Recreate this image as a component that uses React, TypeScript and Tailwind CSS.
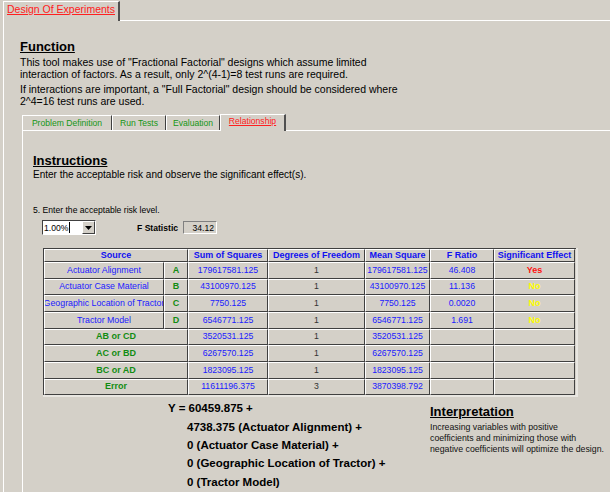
import React from "react";

const cellBase =
  "border-t border-l border-t-white border-l-white border-r border-b border-r-[#404040] border-b-[#404040] flex items-center justify-center whitespace-nowrap overflow-hidden";

type Row = {
  src: string;
  letter?: string;
  ss: string;
  df: string;
  ms: string;
  f: string;
  sig: string;
};

const rows: Row[] = [
  { src: "Actuator Alignment", letter: "A", ss: "179617581.125", df: "1", ms: "179617581.125", f: "46.408", sig: "Yes" },
  { src: "Actuator Case Material", letter: "B", ss: "43100970.125", df: "1", ms: "43100970.125", f: "11.136", sig: "No" },
  { src: "Geographic Location of Tractor", letter: "C", ss: "7750.125", df: "1", ms: "7750.125", f: "0.0020", sig: "No" },
  { src: "Tractor Model", letter: "D", ss: "6546771.125", df: "1", ms: "6546771.125", f: "1.691", sig: "No" },
  { src: "AB or CD", ss: "3520531.125", df: "1", ms: "3520531.125", f: "", sig: "" },
  { src: "AC or BD", ss: "6267570.125", df: "1", ms: "6267570.125", f: "", sig: "" },
  { src: "BC or AD", ss: "1823095.125", df: "1", ms: "1823095.125", f: "", sig: "" },
  { src: "Error", ss: "11611196.375", df: "3", ms: "3870398.792", f: "", sig: "" },
];

function Header({ children }: { children: React.ReactNode }) {
  return (
    <div className={`${cellBase} text-[9px] font-bold text-[#1010f0]`}>{children}</div>
  );
}

export default function App() {
  return (
    <div className="w-[610px] h-[492px] overflow-hidden bg-[#d4d0c8] font-['Liberation_Sans',Arial,sans-serif] text-black flex flex-col">
      {/* top tab bar */}
      <div className="flex h-[21px] shrink-0">
        <div className="ml-[3px] mt-[1px] w-[117px] h-[20px] border-l border-t border-white border-r-2 border-r-[#505050] flex justify-center pt-[1px]">
          <span className="text-[10.5px] leading-[12px] text-[#ff2020] underline">Design Of Experiments</span>
        </div>
        <div className="flex-1 border-b border-white" />
      </div>

      {/* outer panel */}
      <div className="ml-[3px] flex-1 border-l border-white pl-[16px] flex flex-col">
        <div className="mt-[18px] text-[13px] leading-[15px] font-bold underline">Function</div>
        <div className="mt-[2px] text-[10.5px] leading-[12px]">
          <p>
            This tool makes use of "Fractional Factorial" designs which assume limited
            <br />
            interaction of factors. As a result, only 2^(4-1)=8 test runs are required.
          </p>
          <p className="mt-[3px]">
            If interactions are important, a "Full Factorial" design should be considered where
            <br />
            2^4=16 test runs are used.
          </p>
        </div>

        {/* inner tabs */}
        <div className="mt-[7px] ml-[2px] flex items-end h-[16px] shrink-0">
          <div className="w-[90px] h-[15px] border-t border-l border-white border-r border-r-[#404040] flex justify-center pt-[2px] text-[8.6px] leading-[10px] text-[#149614]">
            Problem Definition
          </div>
          <div className="w-[54px] h-[15px] border-t border-l border-white border-r border-r-[#404040] flex justify-center pt-[2px] text-[8.6px] leading-[10px] text-[#149614]">
            Run Tests
          </div>
          <div className="w-[54px] h-[15px] border-t border-l border-white border-r border-r-[#404040] flex justify-center pt-[2px] text-[8.6px] leading-[10px] text-[#149614]">
            Evaluation
          </div>
          <div className="relative z-10 -mb-px w-[66px] h-[17px] bg-[#d4d0c8] border-t border-l border-white border-r-2 border-r-[#505050] flex justify-center pt-[1px] text-[8.6px] leading-[10px] text-[#ff2020] underline">
            Relationship
          </div>
        </div>

        {/* inner panel */}
        <div className="ml-[2px] flex-1 border-t border-l border-white pl-[10px] flex flex-col">
          <div className="mt-[22px] text-[13px] leading-[15px] font-bold underline">Instructions</div>
          <div className="mt-[1px] text-[10px] leading-[12px]">
            Enter the acceptable risk and observe the significant effect(s).
          </div>
          <div className="mt-[24px] text-[8.6px] leading-[10px]">5. Enter the acceptable risk level.</div>

          <div className="mt-[5px] flex items-center h-[15px]">
            <div className="ml-[9px] flex w-[54px] h-[15px] border border-t-[#404040] border-l-[#404040] border-r-white border-b-white bg-white">
              <div className="flex-1 flex items-center pl-[1px] text-[8.6px] leading-[10px]">
                1.00%
                <span className="ml-[1px] w-px h-[11px] bg-black" />
              </div>
              <div className="w-[13px] h-[13px] bg-[#d4d0c8] border border-t-white border-l-white border-r-[#404040] border-b-[#404040] flex items-center justify-center">
                <svg width="7" height="4" viewBox="0 0 7 4">
                  <path d="M0 0 H7 L3.5 4 Z" fill="#000" />
                </svg>
              </div>
            </div>
            <div className="ml-[41px] text-[8.6px] leading-[10px] font-bold">F Statistic</div>
            <div className="ml-[5px] w-[34px] h-[13px] border border-t-[#808080] border-l-[#808080] border-r-white border-b-white flex items-center justify-end pr-[2px] text-[8.6px] leading-[10px]">
              34.12
            </div>
          </div>

          {/* table */}
          <div className="mt-[13px] ml-[10px] w-[535px] border-r-2 border-b-2 border-[#e8e6e1]">
            <div className="grid grid-cols-[120px_24px_80px_97px_65px_64px_81px] grid-rows-[13px_repeat(8,16.67px)] border-t border-l border-[#404040]">
              <div className={`${cellBase} col-span-2 text-[9px] font-bold text-[#1010f0]`}>Source</div>
              <Header>Sum of Squares</Header>
              <Header>Degrees of Freedom</Header>
              <Header>Mean Square</Header>
              <Header>F Ratio</Header>
              <Header>Significant Effect</Header>
              {rows.map((r, i) => (
                <React.Fragment key={i}>
                  {r.letter ? (
                    <>
                      <div className={`${cellBase} text-[8.8px] text-[#1a1aff]`}>{r.src}</div>
                      <div className={`${cellBase} text-[9px] font-bold text-[#128c12]`}>{r.letter}</div>
                    </>
                  ) : (
                    <div className={`${cellBase} col-span-2 text-[9px] font-bold text-[#128c12]`}>{r.src}</div>
                  )}
                  <div className={`${cellBase} text-[8.7px] text-[#1a1aff]`}>{r.ss}</div>
                  <div className={`${cellBase} text-[8.7px] text-[#333333]`}>{r.df}</div>
                  <div className={`${cellBase} text-[8.7px] text-[#1a1aff]`}>{r.ms}</div>
                  <div className={`${cellBase} text-[8.7px] text-[#1a1aff]`}>{r.f}</div>
                  <div
                    className={`${cellBase} text-[9px] font-bold ${
                      r.sig === "Yes" ? "text-[#ff1010]" : "text-[#ffff00]"
                    }`}
                  >
                    {r.sig}
                  </div>
                </React.Fragment>
              ))}
            </div>
          </div>

          {/* equation + interpretation */}
          <div className="mt-[2px] flex">
            <div className="ml-[135px] w-[262px] shrink-0 text-[11.5px] leading-[18.4px] font-bold whitespace-nowrap">
              <div>Y = 60459.875 +</div>
              <div className="pl-[19px]">4738.375 (Actuator Alignment) +</div>
              <div className="pl-[19px]">0 (Actuator Case Material) +</div>
              <div className="pl-[19px]">0 (Geographic Location of Tractor) +</div>
              <div className="pl-[19px]">0 (Tractor Model)</div>
            </div>
            <div className="pt-[5px] whitespace-nowrap">
              <div className="text-[13px] leading-[15px] font-bold underline">Interpretation</div>
              <div className="mt-[3px] text-[8.75px] leading-[10.8px] text-[#111]">
                Increasing variables with positive
                <br />
                coefficients and minimizing those with
                <br />
                negative coefficients will optimize the design.
              </div>
            </div>
          </div>
        </div>
      </div>
    </div>
  );
}
